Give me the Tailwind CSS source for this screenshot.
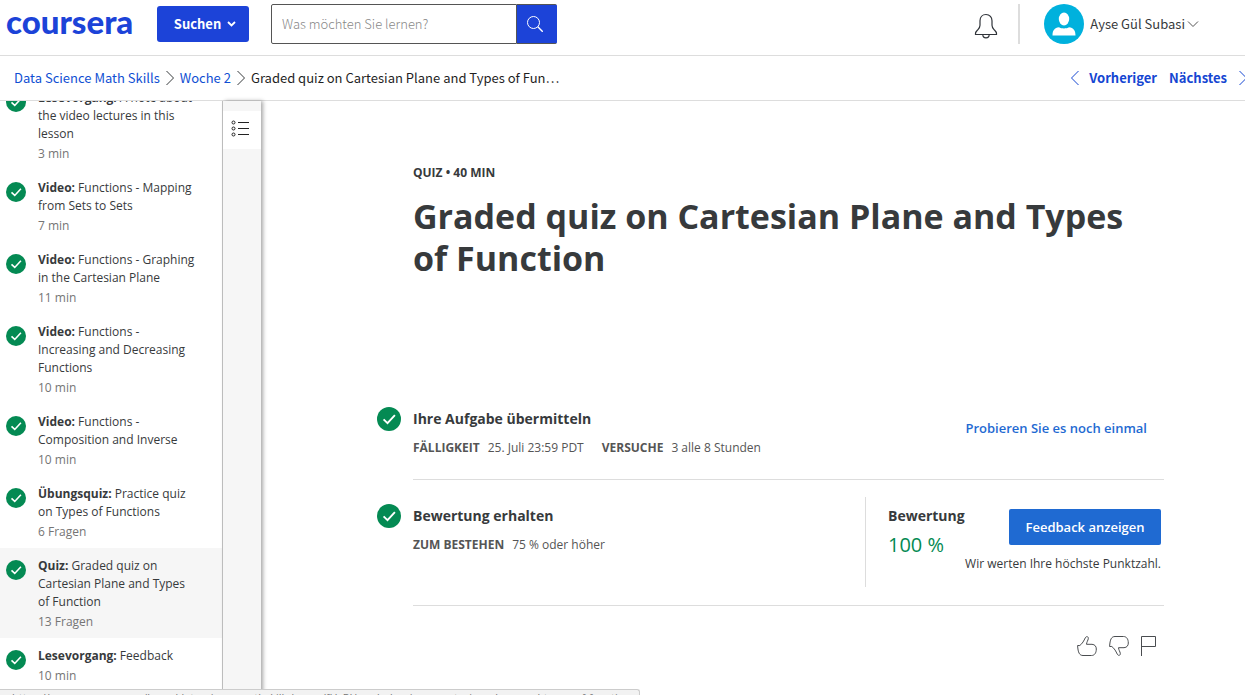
<!DOCTYPE html>
<html lang="de">
<head>
<meta charset="utf-8">
<title>Graded quiz on Cartesian Plane and Types of Function | Coursera</title>
<script src="https://cdn.jsdelivr.net/npm/@tailwindcss/browser@4"></script>
</head>
<body class="relative flex h-screen flex-col overflow-hidden bg-white font-['Open_Sans',sans-serif] text-[#373a3c]">
<svg class="hidden" aria-hidden="true">
  <symbol id="check" viewBox="0 0 24 24"><circle cx="12" cy="12" r="12" fill="#048a53"/><path d="M6.6 12.4l3.9 3.7 7.4-8" fill="none" stroke="#fff" stroke-width="1.9"/></symbol>
</svg>

<header class="flex h-14 shrink-0 items-start border-b border-[#ddd] pl-1.5 pr-[46px] font-['Noto_Sans_CJK_SC',sans-serif]">
  <a href="#" class="flex h-[43px] w-[151px] items-center font-['Lato',sans-serif] text-[33px] leading-none font-black text-[#1c43d8]">coursera</a>
  <button class="mt-1.5 flex h-9 w-[92px] items-center justify-center gap-1.5 rounded-[3px] bg-[#1c43d8] pl-1 text-[13px] font-bold text-white">Suchen
    <svg class="h-2 w-[9px]" viewBox="0 0 9 8" fill="none" stroke="currentColor" stroke-width="1.8"><path d="M1 2l3.500 3.500L8 2"/></svg>
  </button>
  <form class="mt-1 ml-[22px] flex h-10 w-[286px]">
    <input type="text" aria-label="Suche" placeholder="Was möchten Sie lernen?" class="min-w-0 flex-1 rounded-l-[2px] border border-[#555] px-2.5 text-[13px] font-light outline-none placeholder:text-[#888]">
    <button type="button" aria-label="Suchen" class="flex w-10 items-center justify-center rounded-r-[2px] border border-l-0 border-[#1c43d8] border-y-[#555] bg-[#1c43d8] pr-1 text-white">
      <svg class="size-4" viewBox="0 0 16 16" fill="none" stroke="currentColor"><circle cx="6.500" cy="6.500" r="6"/><path d="M10.800 10.800l5 5" stroke-width="1.400"/></svg>
    </button>
  </form>
  <div class="mt-1 ml-auto flex h-10 items-center">
    <button aria-label="Benachrichtigungen" class="mt-1 mr-5">
      <svg class="block h-[26px] w-6" viewBox="0 0 24 26" fill="none" stroke="#30343a" stroke-width="1.200"><path d="M12 1.500c-3.800 0-6 2.800-6 6.200v4.500c0 2-.8 3.200-2.200 4.600C2.400 18.200 1.500 19 1.500 20.500v1h21v-1c0-1.500-.9-2.300-2.300-3.700C18.800 15.400 18 14.200 18 12.200V7.700c0-3.400-2.200-6.200-6-6.200z"/><path d="M8.800 21.500a3.200 3.400 0 0 0 6.400 0"/></svg>
    </button>
    <div class="h-10 w-0.5 bg-[#ddd]"></div>
    <button class="ml-6 flex items-center text-[13px]">
      <svg class="size-10" viewBox="0 0 40 40"><circle cx="20" cy="20" r="20" fill="#00b1dd"/><ellipse cx="20" cy="15" rx="5.200" ry="6.500" fill="#fff"/><path d="M8.500 31.500c0-5.500 2-7.500 6.500-8.300 2.200 1.600 7.800 1.600 10 0 4.500.8 6.500 2.800 6.500 8.300z" fill="#fff"/></svg>
      <span class="ml-1.5">Ayse Gül Subasi</span>
      <svg class="ml-0.5 h-2 w-3" viewBox="0 0 12 8" fill="none" stroke="#555"><path d="M1 1.500l5 5 5-5"/></svg>
    </button>
  </div>
</header>

<nav class="flex h-[45px] shrink-0 items-center border-b border-[#ddd] pl-3.5 font-['Noto_Sans_CJK_SC',sans-serif] text-[13px] whitespace-nowrap text-[#0f4fd3]">
  <a href="#">Data Science Math Skills</a>
  <svg class="mx-1.5 h-4 w-2" viewBox="0 0 8 16" fill="none" stroke="#373a3c"><path d="M.5 1l7 7-7 7"/></svg>
  <a href="#">Woche 2</a>
  <svg class="mx-1.5 h-4 w-2" viewBox="0 0 8 16" fill="none" stroke="#373a3c"><path d="M.5 1l7 7-7 7"/></svg>
  <span class="text-[#1f1f1f]">Graded quiz on Cartesian Plane and Types of Fun…</span>
  <a href="#" class="ml-auto flex items-center gap-2.5 font-bold text-[#1546d2]"><svg class="h-4 w-2" viewBox="0 0 8 16" fill="none" stroke="currentColor"><path d="M7.500 1l-7 7 7 7"/></svg>Vorheriger</a>
  <a href="#" class="ml-3 flex items-center gap-3 font-bold text-[#1546d2]">Nächstes<svg class="h-4 w-1.5" viewBox="0 0 6 16" fill="none" stroke="currentColor"><path d="M.5 1l7 7-7 7"/></svg></a>
</nav>

<div class="flex min-h-0 flex-1">
  <aside class="w-[223px] shrink-0 overflow-hidden border-r border-[#c4c4c4] text-[12px] leading-[18px]">
    <ul class="-mt-[21px]">
      <li><a href="#" class="flex gap-3 pt-[9px] pr-6 pb-[7px] pl-1.5"><svg class="mt-[3px] size-5 shrink-0"><use href="#check"/></svg><span><span class="block"><b>Lesevorgang:</b> A note about the video lectures in this lesson</span><span class="mt-0.5 block text-[#757575]">3 min</span></span></a></li>
      <li><a href="#" class="flex gap-3 pt-[9px] pr-6 pb-[7px] pl-1.5"><svg class="mt-[3px] size-5 shrink-0"><use href="#check"/></svg><span><span class="block"><b>Video:</b> Functions - Mapping from Sets to Sets</span><span class="mt-0.5 block text-[#757575]">7 min</span></span></a></li>
      <li><a href="#" class="flex gap-3 pt-[9px] pr-6 pb-[7px] pl-1.5"><svg class="mt-[3px] size-5 shrink-0"><use href="#check"/></svg><span><span class="block"><b>Video:</b> Functions - Graphing in the Cartesian Plane</span><span class="mt-0.5 block text-[#757575]">11 min</span></span></a></li>
      <li><a href="#" class="flex gap-3 pt-[9px] pr-6 pb-[7px] pl-1.5"><svg class="mt-[3px] size-5 shrink-0"><use href="#check"/></svg><span><span class="block"><b>Video:</b> Functions - Increasing and Decreasing Functions</span><span class="mt-0.5 block text-[#757575]">10 min</span></span></a></li>
      <li><a href="#" class="flex gap-3 pt-[9px] pr-6 pb-[7px] pl-1.5"><svg class="mt-[3px] size-5 shrink-0"><use href="#check"/></svg><span><span class="block"><b>Video:</b> Functions - Composition and Inverse</span><span class="mt-0.5 block text-[#757575]">10 min</span></span></a></li>
      <li><a href="#" class="flex gap-3 pt-[9px] pr-6 pb-[7px] pl-1.5"><svg class="mt-[3px] size-5 shrink-0"><use href="#check"/></svg><span><span class="block"><b>Übungsquiz:</b> Practice quiz on Types of Functions</span><span class="mt-0.5 block text-[#757575]">6 Fragen</span></span></a></li>
      <li class="bg-[#f6f6f6]"><a href="#" aria-current="page" class="flex gap-3 pt-[9px] pr-6 pb-[7px] pl-1.5"><svg class="mt-[3px] size-5 shrink-0"><use href="#check"/></svg><span><span class="block"><b>Quiz:</b> Graded quiz on Cartesian Plane and Types of Function</span><span class="mt-0.5 block text-[#757575]">13 Fragen</span></span></a></li>
      <li><a href="#" class="flex gap-3 pt-[9px] pr-6 pb-[7px] pl-1.5"><svg class="mt-[3px] size-5 shrink-0"><use href="#check"/></svg><span><span class="block"><b>Lesevorgang:</b> Feedback</span><span class="mt-0.5 block text-[#757575]">10 min</span></span></a></li>
    </ul>
  </aside>
  <div class="w-[38px] shrink-0 bg-[#f6f6f6] pt-2.5 shadow-[2px_0_4px_rgba(0,0,0,0.35)]">
    <button aria-label="Gliederung" class="flex h-[38px] w-full items-center justify-center bg-white pr-1 pb-1">
      <svg class="h-[17px] w-[18px]" viewBox="0 0 18 17" fill="none" stroke="#222"><circle cx="2.500" cy="2.500" r="1.500"/><circle cx="2.500" cy="8.500" r="1.500"/><circle cx="2.500" cy="14.500" r="1.500"/><path d="M7 2.500h11M7 8.500h11M7 14.500h11"/></svg>
    </button>
  </div>

  <main class="min-w-0 flex-1 overflow-hidden pt-[63px] pr-[81px] pl-[116px]">
    <div class="h-[236px] pl-9">
      <p class="text-[12px] leading-[18px] font-bold">QUIZ • 40 MIN</p>
      <h1 class="mt-[13px] text-[34px] leading-[42px] font-bold">Graded quiz on Cartesian Plane and Types of Function</h1>
    </div>
    <section class="flex gap-3">
      <svg class="mt-[7px] size-6 shrink-0"><use href="#check"/></svg>
      <div class="flex h-20 flex-1 items-start border-b border-[#ddd]">
        <div class="flex-1 pt-2">
          <h2 class="text-[14px] leading-[22px] font-bold">Ihre Aufgabe übermitteln</h2>
          <p class="mt-[9px] flex gap-2 text-[12px] leading-[18px] text-[#555]"><b>FÄLLIGKEIT</b><span class="mr-2.5">25. Juli 23:59 PDT</span><b>VERSUCHE</b><span>3 alle 8 Stunden</span></p>
        </div>
        <button class="mt-[18px] mr-[17px] text-[13px] leading-5 font-semibold text-[#1f6ad2]">Probieren Sie es noch einmal</button>
      </div>
    </section>
    <section class="flex gap-3">
      <svg class="mt-6 size-6 shrink-0"><use href="#check"/></svg>
      <div class="flex h-[126px] flex-1 items-start border-b border-[#ddd] pt-[17px]">
        <div class="flex-1 pt-2">
          <h2 class="text-[14px] leading-[22px] font-bold">Bewertung erhalten</h2>
          <p class="mt-[9px] flex gap-2 text-[12px] leading-[18px] text-[#555]"><b>ZUM BESTEHEN</b><span>75 % oder höher</span></p>
        </div>
        <div class="flex h-[90px] w-[299px] justify-between border-l border-[#ddd] pr-[3px] pl-[22px]">
          <div class="w-0 pt-2 whitespace-nowrap">
            <h2 class="text-[14px] leading-[22px] font-bold">Bewertung</h2>
            <p class="mt-1 text-[20px] leading-[28px] text-[#048a53]">100 %</p>
          </div>
          <div class="flex flex-col items-end pt-3">
            <button class="h-9 w-[152px] rounded-[2px] bg-[#1f6ad2] pt-0.5 text-[13px] font-semibold text-white">Feedback anzeigen</button>
            <p class="mt-2.5 text-[12px] leading-[18px] whitespace-nowrap">Wir werten Ihre höchste Punktzahl.</p>
          </div>
        </div>
      </div>
    </section>
    <div class="mt-[30px] flex justify-end gap-3 pr-[7px] text-[#4a4d50]">
      <button aria-label="Gefällt mir"><svg class="block size-5" viewBox="0 0 20 20" fill="none" stroke="currentColor"><path d="M.6 9.500h2.200C5.500 7.500 7 4.500 8.200 2 9.300-.2 11.600.4 11.300 2.700c-.3 1.800-1.600 3.200-1.800 5.600h5.500c3 .2 4.300 2.200 4.300 4.700 0 4-1.800 6.500-4.800 6.500H6c-3.500 0-5-2.800-5.400-10z"/></svg></button>
      <button aria-label="Gefällt mir nicht"><svg class="block size-5" viewBox="0 0 20 20" fill="none" stroke="currentColor"><path d="M.6 10.500h2.200c2.700 2 4.200 5 5.400 7.500 1.100 2.200 3.400 1.600 3.100-.7-.3-1.800-1.600-3.200-1.800-5.600h5.500c3-.2 4.300-2.200 4.300-4.700 0-4-1.800-6.500-4.800-6.500H6C2.500.5 1 3.300.6 10.500z"/></svg></button>
      <button aria-label="Melden"><svg class="block h-5 w-4" viewBox="0 0 16 20" fill="none" stroke="currentColor"><path d="M.5 20V.5h14v10H.5"/></svg></button>
    </div>
  </main>
</div>

<div class="absolute bottom-0 left-0 h-1.5 w-[640px] overflow-hidden rounded-tr-[3px] border-t border-r border-[#ccc] bg-[#f2f2f2] pl-3 text-[11px] leading-[15px] whitespace-nowrap text-[#777]">https://www.coursera.org/learn/datasciencemathskills/exam/fHzPJ/graded-quiz-on-cartesian-plane-and-types-of-function</div>
</body>
</html>
